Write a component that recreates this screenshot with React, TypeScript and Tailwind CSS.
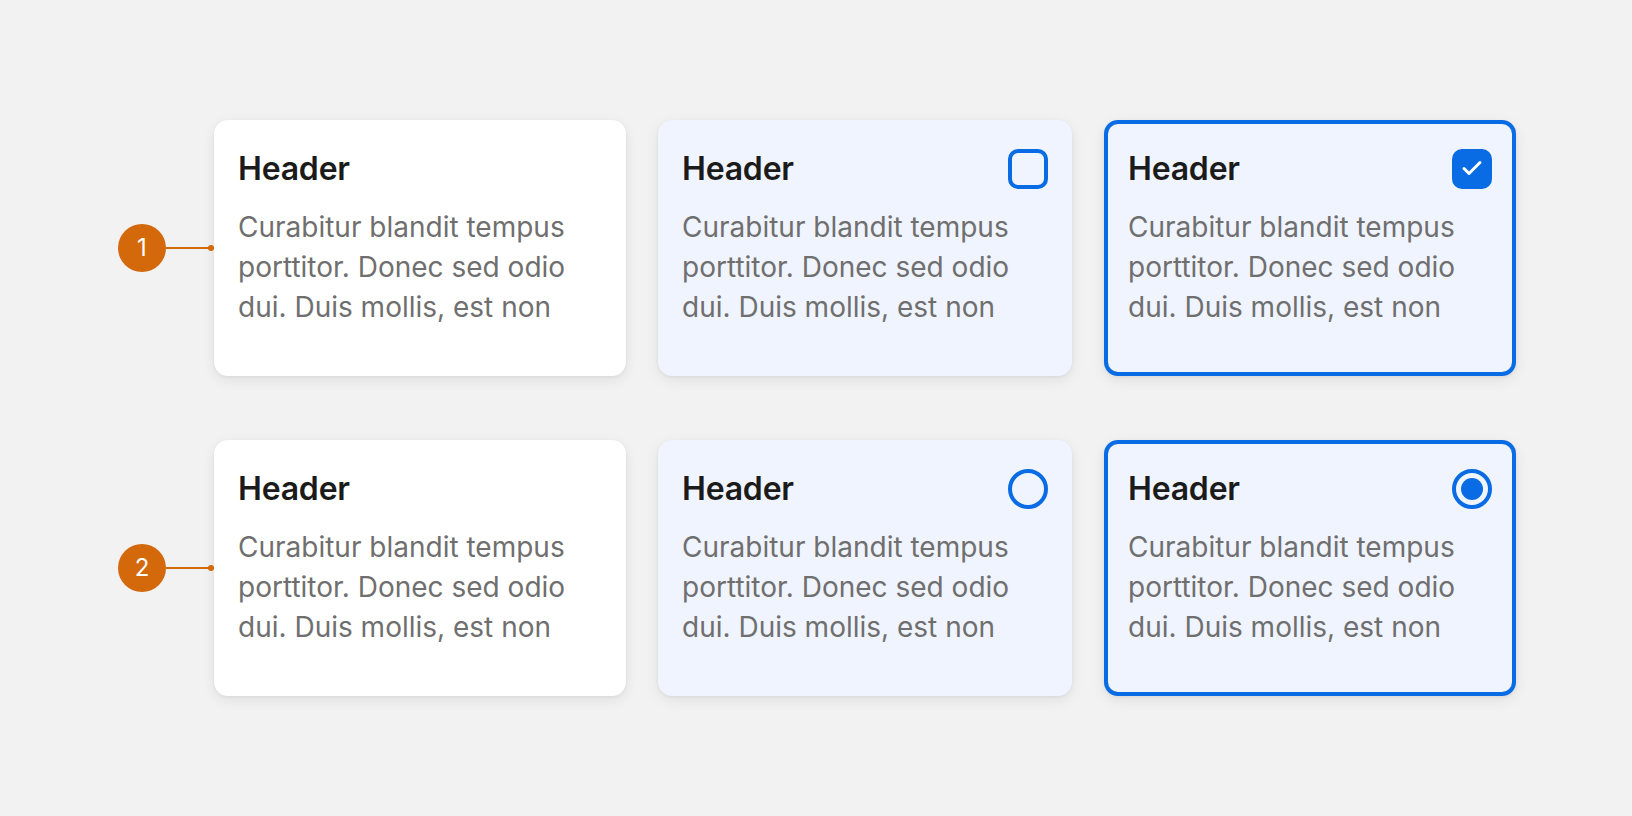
import React from "react";

const BODY = "Curabitur blandit tempus porttitor. Donec sed odio dui. Duis mollis, est non";

function Badge({ n }: { n: number }) {
  return (
    <div className="flex items-center">
      <div className="w-[48px] h-[48px] rounded-full bg-[#d3690b] text-white flex items-center justify-center text-[24px] font-normal leading-none">
        {n}
      </div>
      <div className="relative w-[48px] h-[2px] bg-[#d3690b]">
        <div className="absolute right-0 top-[-2px] w-[6px] h-[6px] rounded-full bg-[#d3690b]" />
      </div>
    </div>
  );
}

function Checkbox({ checked }: { checked: boolean }) {
  if (checked) {
    return (
      <div className="w-[40px] h-[40px] rounded-[10px] bg-[#0a6ce4]">
        <svg width="40" height="40" viewBox="0 0 40 40" fill="none">
          <path d="M12 19.5 L17 24.5 L28 13.5" stroke="white" strokeWidth="3" strokeLinecap="round" strokeLinejoin="round" />
        </svg>
      </div>
    );
  }
  return <div className="w-[40px] h-[40px] rounded-[10px] border-[4px] border-[#0a6ce4]" />;
}

function Radio({ checked }: { checked: boolean }) {
  return (
    <div className="w-[40px] h-[40px] rounded-full border-[4px] border-[#0a6ce4] flex items-center justify-center">
      {checked && <div className="w-[22px] h-[22px] rounded-full bg-[#0a6ce4]" />}
    </div>
  );
}

function Card({
  variant,
  control,
  width,
}: {
  variant: "plain" | "tint" | "selected";
  control?: React.ReactNode;
  width: "a" | "b";
}) {
  const w = width === "a" ? "w-[412px]" : "w-[414px]";
  const base = `${w} h-[256px] rounded-[14px] shadow-[0_4px_14px_rgba(0,0,0,0.08),0_1px_3px_rgba(0,0,0,0.06)] flex flex-col`;
  const cls =
    variant === "plain"
      ? `${base} bg-white pt-[29px] px-[24px]`
      : variant === "tint"
      ? `${base} bg-[#eff4fe] pt-[29px] px-[24px]`
      : `${base} bg-[#eff4fe] border-[4px] border-[#0a6ce4] pt-[25px] px-[20px]`;
  return (
    <div className={cls}>
      <div className="flex items-center justify-between h-[40px]">
        <div className="text-[32px] leading-[40px] font-semibold text-[#1b1b1b] tracking-[-0.2px]">Header</div>
        {control}
      </div>
      <p className="mt-[18px] text-[28px] leading-[40px] text-[#6f6f6f] pr-[12px]">{BODY}</p>
    </div>
  );
}

export default function App() {
  return (
    <div
      className="w-full h-[816px] bg-[#f2f2f2] flex flex-col items-center justify-center gap-[64px]"
      style={{ fontFamily: "Inter, 'Noto Sans', sans-serif" }}
    >
      <div className="flex items-center ml-[2px]">
        <Badge n={1} />
        <div className="flex gap-[32px]">
          <Card variant="plain" width="a" />
          <Card variant="tint" width="b" control={<Checkbox checked={false} />} />
          <Card variant="selected" width="a" control={<Checkbox checked={true} />} />
        </div>
      </div>
      <div className="flex items-center ml-[2px]">
        <Badge n={2} />
        <div className="flex gap-[32px]">
          <Card variant="plain" width="a" />
          <Card variant="tint" width="b" control={<Radio checked={false} />} />
          <Card variant="selected" width="a" control={<Radio checked={true} />} />
        </div>
      </div>
    </div>
  );
}
